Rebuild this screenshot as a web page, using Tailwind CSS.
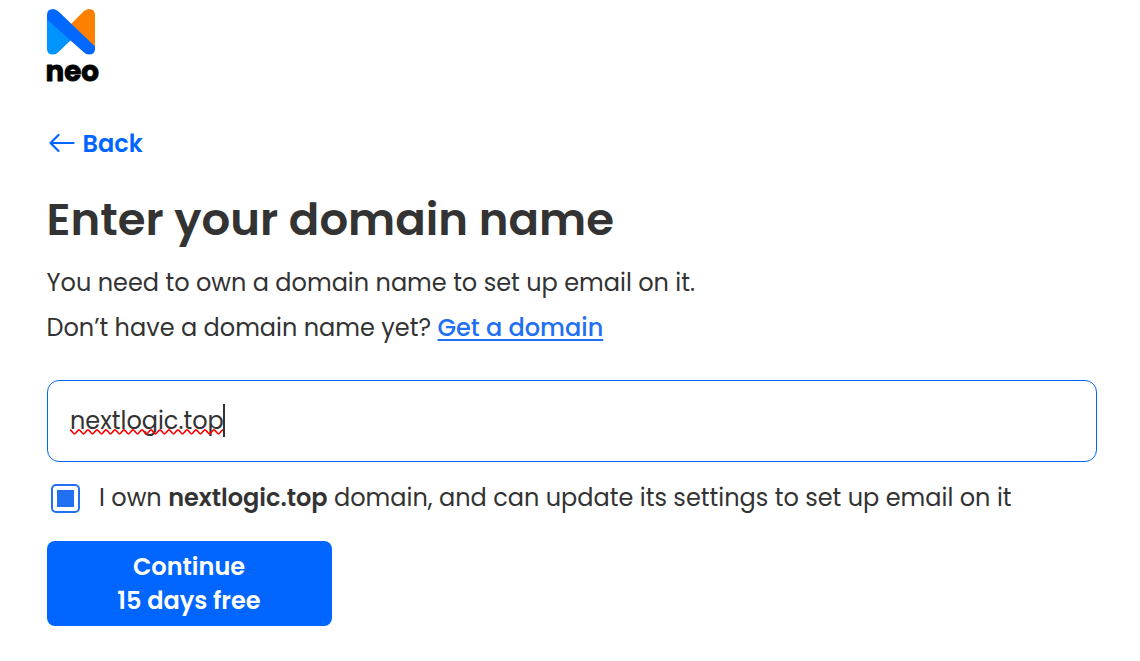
<!DOCTYPE html>
<html lang="en">
<head>
    <meta charset="UTF-8">
    <meta name="viewport" content="width=device-width, initial-scale=1.0">
    <title>Enter your domain name</title>
    <script src="https://cdn.jsdelivr.net/npm/@tailwindcss/browser@4"></script>
</head>
<body class="bg-white text-[#333333] font-['Poppins','Inter',sans-serif] text-[24px] h-screen overflow-hidden">
    <main class="flex flex-col items-start pl-[47px] pt-2 w-[1097px]">
        <!-- Logo -->
        <svg class="w-[52px] h-[76px] overflow-visible" viewBox="0 0 52 76" fill="none">
            <path d="M23 17L36.500 3.500Q39 1 42 1Q48 1 48 7V40Z" fill="#ff7f00"/>
            <path d="M0 7V41Q0 46.500 6 46.500Q9 46.500 11.500 44L25 31Z" fill="#0094ff"/>
            <path d="M0 7Q0 1 6 1Q9 1 11.500 3.500L48 38.500V41Q48 46.500 42 46.500Q39 46.500 36.500 44L0 11.500Z" fill="#0068ff"/>
            <text x="-1.500" y="72.500" textLength="53.500" lengthAdjust="spacingAndGlyphs" fill="#000" stroke="#000" stroke-width="0.800" stroke-linejoin="round" class="text-[28px] font-bold">neo</text>
        </svg>

        <a href="#" class="mt-[42px] h-[34px] flex items-center gap-[7.500px] pl-px text-[#0066ff] font-semibold">
            <svg class="w-[27px] h-[20px]" viewBox="0 0 27 20" fill="none" stroke="currentColor" stroke-width="2.200" stroke-linecap="round" stroke-linejoin="round">
                <path d="M25.500 10H2.500M10.500 2L2.500 10L10.500 18"/>
            </svg>
            <span class="pt-[2px]">Back</span>
        </a>

        <h1 class="mt-[26px] -ml-[0.5px] text-[45px] leading-[68px] font-semibold whitespace-nowrap">Enter your domain name</h1>

        <p class="mt-[6px] -ml-[0.5px] leading-[45px] whitespace-nowrap">You need to own a domain name to set up email on it.</p>
        <p class="-ml-[0.5px] leading-[45px] whitespace-nowrap"><span>Don’t have a domain name yet?</span> <a href="#" class="text-[#216ff2] font-medium underline decoration-2 underline-offset-3">Get a domain</a></p>

        <!-- Domain field -->
        <div class="mt-[30px] w-full h-[82px] border border-[#0066ff] rounded-xl flex items-center pl-[22px] pb-px">
            <div class="relative flex items-center h-[33px]">
                <span class="w-[153px] pt-px whitespace-nowrap">nextlogic.top</span>
                <svg class="absolute left-0 top-[25px] w-[153px] h-[6px]" fill="none">
                    <defs>
                        <pattern id="squiggle" width="9" height="6" patternUnits="userSpaceOnUse">
                            <path d="M-2 1Q0 0 2 2.500T4.500 5T7 2.500T11 1" stroke="#ff0000" stroke-width="1.700"/>
                        </pattern>
                    </defs>
                    <rect width="153" height="6" fill="url(#squiggle)"/>
                </svg>
                <span class="w-[2px] h-[33px] bg-[#333333]"></span>
            </div>
        </div>

        <label class="mt-[18px] h-[36px] flex items-center pl-[4.500px] whitespace-nowrap">
            <span class="-ml-px mt-px mr-[19.500px] w-[29px] h-[29px] border-2 border-[#216ff2] rounded-[5px] flex items-center justify-center">
                <span class="w-[17px] h-[17px] bg-[#216ff2]"></span>
            </span>
            <span>I own <b class="font-semibold">nextlogic.top</b> domain, and can update its settings to set up email on it</span>
        </label>

        <button class="mt-[25px] pr-px w-[285px] h-[85px] rounded-lg bg-[#0066ff] text-white font-semibold leading-[34px]">
            <span class="block">Continue</span>
            <span class="block">15 days free</span>
        </button>
    </main>
</body>
</html>
